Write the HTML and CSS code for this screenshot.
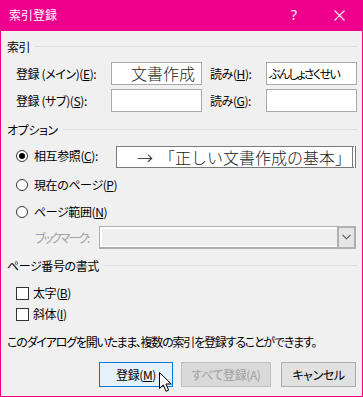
FILE: index.html
```html
<!DOCTYPE html>
<html lang="ja">
<head>
<meta charset="utf-8">
<title>索引登録</title>
<link rel="stylesheet" href="styles.css">
</head>
<body>
<div class="window">
  <div class="titlebar">
    <span class="title">索引登録</span>
    <span class="help">?</span>
    <svg class="close" width="11" height="11" viewBox="0 0 11 11"><path d="M0.5 0.5L10.5 10.5M10.5 0.5L0.5 10.5" stroke="#fff" stroke-width="1.1" fill="none"/></svg>
  </div>
  <div class="client">
    <div class="group g1"><span class="group-title">索引</span><div class="rule"></div></div>

    <div class="row entry e1">
      <span class="lbl lbl-main">登録 (メイン)(<u>E</u>):</span>
      <div class="field field-main big">文書作成</div>
      <span class="lbl lbl-yomi">読み(<u>H</u>):</span>
      <div class="field field-yomi">ぶんしょさくせい</div>
    </div>
    <div class="row entry e2">
      <span class="lbl lbl-main">登録 (サブ)(<u>S</u>):</span>
      <div class="field field-main"></div>
      <span class="lbl lbl-yomi">読み(<u>G</u>):</span>
      <div class="field field-yomi"></div>
    </div>

    <div class="group g2"><span class="group-title">オプション</span><div class="rule"></div></div>

    <div class="row opt r1">
      <div class="choice up">
        <span class="radio checked"></span>
        <span class="lbl lbl-xref">相互参照(<u>C</u>):</span>
      </div>
      <div class="field field-xref big"><span class="arrow">→</span>「正しい文書作成の基本」</div>
    </div>
    <div class="row opt r2">
      <div class="choice">
        <span class="radio"></span>
        <span class="lbl">現在のページ(<u>P</u>)</span>
      </div>
    </div>
    <div class="row opt r3">
      <div class="choice">
        <span class="radio"></span>
        <span class="lbl">ページ範囲(<u>N</u>)</span>
      </div>
    </div>
    <div class="row bm">
      <span class="lbl lbl-bm">ブックマーク:</span>
      <div class="combo">
        <div class="combo-field"></div>
        <div class="combo-btn">
          <svg width="9" height="6" viewBox="0 0 9 6"><path d="M0.5 0.8L4.5 4.8L8.5 0.8" stroke="#505050" stroke-width="1.1" fill="none"/></svg>
        </div>
      </div>
    </div>

    <div class="group g3"><span class="group-title">ページ番号の書式</span><div class="rule"></div></div>

    <div class="row opt c1">
      <div class="choice">
        <span class="check"></span>
        <span class="lbl">太字(<u>B</u>)</span>
      </div>
    </div>
    <div class="row opt c2">
      <div class="choice">
        <span class="check"></span>
        <span class="lbl">斜体(<u>I</u>)</span>
      </div>
    </div>

    <div class="note">このダイアログを開いたまま、複数の索引を登録することができます。</div>

    <div class="buttons">
      <button class="btn btn-default">登録(<u>M</u>)</button>
      <button class="btn btn-disabled" disabled>すべて登録(A)</button>
      <button class="btn btn-cancel">キャンセル</button>
    </div>
  </div>
  <svg class="cursor" width="14" height="21" viewBox="0 0 14 21"><path d="M0.5 0.5L0.5 16.5L4.3 12.9L7 19.3L9.6 18.2L7 12L12.3 12Z" fill="#fff" stroke="#000" stroke-width="1" stroke-linejoin="miter"/></svg>
</div>
</body>
</html>
```

FILE: styles.css
```css
html, body {
  margin: 0;
  padding: 0;
  background: #ffffff;
}

body {
  font-family: "Noto Sans CJK JP", "Noto Sans", sans-serif;
  font-size: 12px;
  color: #000;
  font-feature-settings: "palt";
}

u {
  text-decoration: underline;
  text-underline-offset: 1px;
}

.window {
  position: relative;
  width: 363px;
  height: 397px;
  display: flex;
  flex-direction: column;
}

.titlebar {
  height: 31px;
  background: #ef008c;
  color: #fff;
  display: flex;
  align-items: center;
  padding-left: 9px;
  box-sizing: border-box;
  flex: none;
}

.title {
  flex: 1;
  font-size: 12px;
  line-height: 14px;
  margin-top: -1px;
}

.help {
  width: 8px;
  text-align: center;
  font-family: "Noto Sans", sans-serif;
  font-size: 14px;
  line-height: 14px;
  margin-right: 36px;
  margin-top: -1px;
}

.close {
  margin-right: 18px;
  margin-top: -1px;
  display: block;
}

.client {
  flex: 1;
  background: #f0f0f0;
  border: 1px solid #ef008c;
  border-top: none;
  display: flex;
  flex-direction: column;
}

.group {
  display: flex;
  align-items: center;
  height: 14px;
  padding-left: 6px;
  padding-right: 5px;
}

.group-title {
  line-height: 14px;
  white-space: nowrap;
  letter-spacing: -0.4px;
}

.rule {
  flex: 1;
  height: 1px;
  background: #dcdcdc;
  margin-left: 5px;
  margin-top: -1px;
}

.g1 { margin-top: 9px; }
.g2 { margin-top: 11px; }
.g3 { margin-top: 11px; }

.row {
  display: flex;
  align-items: center;
}

.lbl {
  line-height: 14px;
  white-space: nowrap;
  letter-spacing: -0.4px;
}

.entry {
  height: 23px;
  padding-left: 15px;
}

.e1 { margin-top: 8px; }
.e2 { margin-top: 4px; }

.lbl-main { width: 95px; }

.lbl-yomi {
  width: 56px;
  margin-left: 8px;
}

.field {
  box-sizing: border-box;
  height: 23px;
  background: #fff;
  border: 1px solid #a9a9a9;
  line-height: 21px;
  white-space: nowrap;
  overflow: hidden;
}

.field-main {
  width: 91px;
}

.field-yomi {
  width: 91px;
  padding-left: 2px;
  font-size: 12px;
  letter-spacing: -1.6px;
}

.big {
  font-size: 16px;
  font-weight: 300;
  color: #222;
  font-feature-settings: normal;
}

.field-main.big {
  padding-left: 19px;
}

.opt {
  height: 14px;
  padding-left: 15px;
}

.choice {
  display: flex;
  align-items: center;
}

.up {
  margin-bottom: 3px;
}

.radio {
  box-sizing: border-box;
  width: 12px;
  height: 12px;
  border: 1px solid #333;
  border-radius: 50%;
  background: #fff;
  margin-right: 6px;
  display: flex;
  align-items: center;
  justify-content: center;
}

.radio.checked::before {
  content: "";
  width: 6px;
  height: 6px;
  border-radius: 50%;
  background: #000;
}

.check {
  box-sizing: border-box;
  width: 13px;
  height: 13px;
  border: 1px solid #333;
  background: #fff;
  margin-right: 4px;
}

.r1 {
  height: 22px;
  margin-top: 9px;
}

.lbl-xref { width: 82px; }

.field-xref {
  width: 240px;
  height: 22px;
  line-height: 20px;
  border-color: #7a7a7a;
  border-right: 4px double #7a7a7a;
  padding-left: 20px;
}

.arrow {
  margin-right: 6px;
}

.r2 { margin-top: 10px; }
.r3 { margin-top: 13px; }

.bm {
  height: 22px;
  margin-top: 7px;
  padding-left: 34px;
}

.lbl-bm {
  width: 64px;
  color: #a0a0a0;
  margin-top: 2px;
  letter-spacing: -2px;
}

.combo {
  box-sizing: border-box;
  width: 257px;
  height: 23px;
  border: 1px solid #adadad;
  border-bottom-width: 2px;
  background: #fff;
  display: flex;
  padding: 2px 0 1px 2px;
}

.combo-field {
  flex: 1;
  background: #efefef;
}

.combo-btn {
  box-sizing: border-box;
  width: 18px;
  margin-top: -3px;
  margin-bottom: -3px;
  border: 2px solid #b0b0b0;
  border-right-width: 1px;
  background: #e5e5e5;
  display: flex;
  align-items: center;
  justify-content: center;
}

.combo-btn svg { display: block; }

.c1 { margin-top: 13px; }
.c2 { margin-top: 7px; }

.note {
  height: 14px;
  line-height: 14px;
  margin-top: 14px;
  padding-left: 6px;
  white-space: nowrap;
  letter-spacing: -1.2px;
}

.buttons {
  display: flex;
  height: 25px;
  margin-top: 13px;
  padding-left: 98px;
}

.btn {
  box-sizing: border-box;
  height: 25px;
  padding: 0;
  font-family: inherit;
  font-size: 12px;
  font-feature-settings: "palt";
  letter-spacing: -0.4px;
  color: #000;
  border: 1px solid #adadad;
  background: #e1e1e1;
  line-height: 22px;
}

.btn-default {
  width: 74px;
  border-color: #0078d7;
  background: #e5f1fb;
}

.btn-disabled {
  width: 90px;
  margin-left: 8px;
  border-color: #bfbfbf;
  background: #d9d9d9;
  color: #a0a0a0;
}

.btn-cancel {
  width: 75px;
  margin-left: 10px;
}

.cursor {
  position: absolute;
  left: 159px;
  top: 372px;
  display: block;
}
```
